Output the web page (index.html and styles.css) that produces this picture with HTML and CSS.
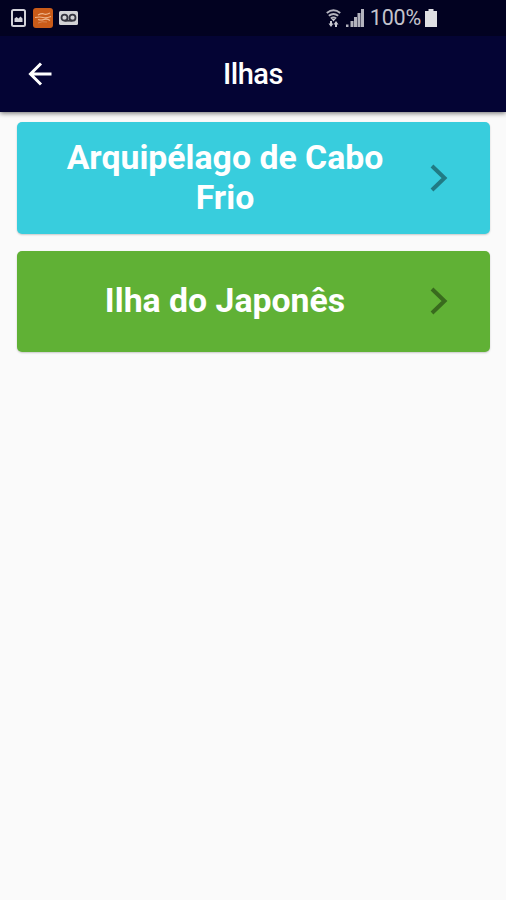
FILE: index.html
```html
<!DOCTYPE html>
<html lang="pt-BR">
<head>
  <meta charset="UTF-8">
  <meta name="viewport" content="width=device-width, initial-scale=1.0">
  <title>Ilhas</title>
  <link rel="stylesheet" href="styles.css">
</head>
<body>
  <header class="top">
    <div class="status-bar">
      <div class="notifications">
        <!-- imagem -->
        <svg width="15" height="18" viewBox="0 0 15 18">
          <rect x="1" y="1" width="13" height="16" rx="1.5" fill="none" stroke="#d2d2da" stroke-width="2"/>
          <path d="M3.500 13V9.500l2-1.500 2 1.500 2-2 2 2V13z" fill="#d2d2da"/>
        </svg>
        <!-- app -->
        <svg width="20" height="20" viewBox="0 0 20 20">
          <rect width="20" height="20" rx="3" fill="#c95b19"/>
          <path d="M5 7q4-2 6-1t6-1M2 9.500q5-1 8 0t8-1M5 11.500q3 1 6 0t6 1" fill="none" stroke="#efb58b" stroke-width="1.200"/>
          <path d="M5 15q4-2 9-1" fill="none" stroke="#d98550"/>
        </svg>
        <!-- correio de voz -->
        <svg width="19" height="14" viewBox="0 0 19 14">
          <rect width="19" height="14" rx="1.5" fill="#d2d2d6"/>
          <g fill="none" stroke="#34343f" stroke-width="1.800">
            <circle cx="5.500" cy="6.700" r="3"/>
            <circle cx="13.500" cy="6.700" r="3"/>
            <path d="M5.500 9.700h8"/>
          </g>
        </svg>
      </div>
      <div class="system">
        <!-- wi-fi -->
        <svg class="wifi" width="15" height="18" viewBox="0 0 15 18">
          <g fill="none" stroke="#b4b4be" stroke-width="2">
            <path d="M.8 4Q7.500-1.500 14.200 4"/>
            <path d="M2.800 6.800q4.700-3.500 9.400 0"/>
            <path d="M4.800 9.500q2.700-2 5.400 0"/>
          </g>
          <path d="M5.500 10h4l-2 2.500zM4 12h2v2.500h1.500L5 18l-2.500-3.500H4zM9 18h2v-2.500h1.500L10 12l-2.500 3.500H9z" fill="#c8c8d0"/>
        </svg>
        <!-- sinal -->
        <svg class="signal" width="18" height="18" viewBox="0 0 18 18">
          <path d="M0 15.500h2.500V18H0zM4.500 12h3v6h-3zM8 8h3v10H8zM11.500 4h3v14h-3zM15 0h3v18h-3z" fill="#b4b4be"/>
        </svg>
        <span class="percent">100%</span>
        <!-- bateria -->
        <svg class="battery" width="12" height="18" viewBox="0 0 12 18">
          <path d="M3.500 0h5v2H12v16H0V2h3.500z" fill="#e0e0e4"/>
        </svg>
      </div>
    </div>
    <div class="app-bar">
      <a class="back" href="#" aria-label="Voltar">
        <svg width="24" height="24" viewBox="0 0 24 24">
          <path d="M13 1.500L2.500 12 13 22.500M2.500 12H23.500" fill="none" stroke="#fff" stroke-width="3"/>
        </svg>
      </a>
      <h1>Ilhas</h1>
    </div>
  </header>

  <main class="list">
    <a class="card card-blue" href="#">
      <span class="label">Arquipélago de Cabo Frio</span>
      <svg class="chevron" width="18" height="28" viewBox="0 0 18 28">
        <path d="M2 2l12.500 12L2 26" fill="none" stroke="#217b84" stroke-width="4"/>
      </svg>
    </a>
    <a class="card card-green" href="#">
      <span class="label">Ilha do Japonês</span>
      <svg class="chevron" width="18" height="28" viewBox="0 0 18 28">
        <path d="M2 2l12.500 12L2 26" fill="none" stroke="#396b1e" stroke-width="4"/>
      </svg>
    </a>
  </main>
</body>
</html>
```
FILE: styles.css
```css
* {
  box-sizing: border-box;
}

body {
  margin: 0;
  min-height: 900px;
  background: #fafafa;
  font-family: Roboto, "Liberation Sans", sans-serif;
}

svg {
  display: block;
  flex-shrink: 0;
}

.top {
  height: 112px;
  background: #040434;
  box-shadow: 0 1px 5px rgba(0, 0, 0, 0.6);
}

.status-bar {
  display: flex;
  justify-content: space-between;
  align-items: center;
  height: 36px;
  padding: 0 69px 0 11px;
  background: #020221;
}

.notifications {
  display: flex;
  align-items: center;
  gap: 6px;
}

.notifications svg:nth-child(2) {
  margin-left: 1px;
}

.system {
  display: flex;
  align-items: center;
}

.signal {
  margin-left: 5px;
}

.percent {
  margin: 0 4px 0 6px;
  color: #c4c4cc;
  font-size: 21.5px;
  letter-spacing: -0.2px;
  line-height: 36px;
}

.app-bar {
  display: grid;
  grid-template-columns: 60px 1fr 60px;
  align-items: center;
  height: 76px;
}

.back {
  padding-left: 28px;
}

h1 {
  margin: 0;
  color: #fff;
  font-size: 29px;
  font-weight: 500;
  letter-spacing: -0.5px;
  text-align: center;
}

.list {
  display: flex;
  flex-direction: column;
  gap: 17px;
  padding: 10px 16px 0 17px;
}

.card {
  display: flex;
  align-items: center;
  padding: 0 42px 0 34px;
  border-radius: 5px;
  color: #fff;
  text-decoration: none;
  box-shadow: 0 1px 2px rgba(0, 0, 0, 0.2);
}

.card-blue {
  height: 112px;
  padding-bottom: 1px;
  background: #38cddd;
}

.card-green {
  height: 101px;
  padding-bottom: 1px;
  background: #60b135;
}

.label {
  width: 348px;
  font-size: 33.8px;
  font-weight: 700;
  line-height: 39.5px;
  text-align: center;
}

.chevron {
  margin-left: auto;
}
```
